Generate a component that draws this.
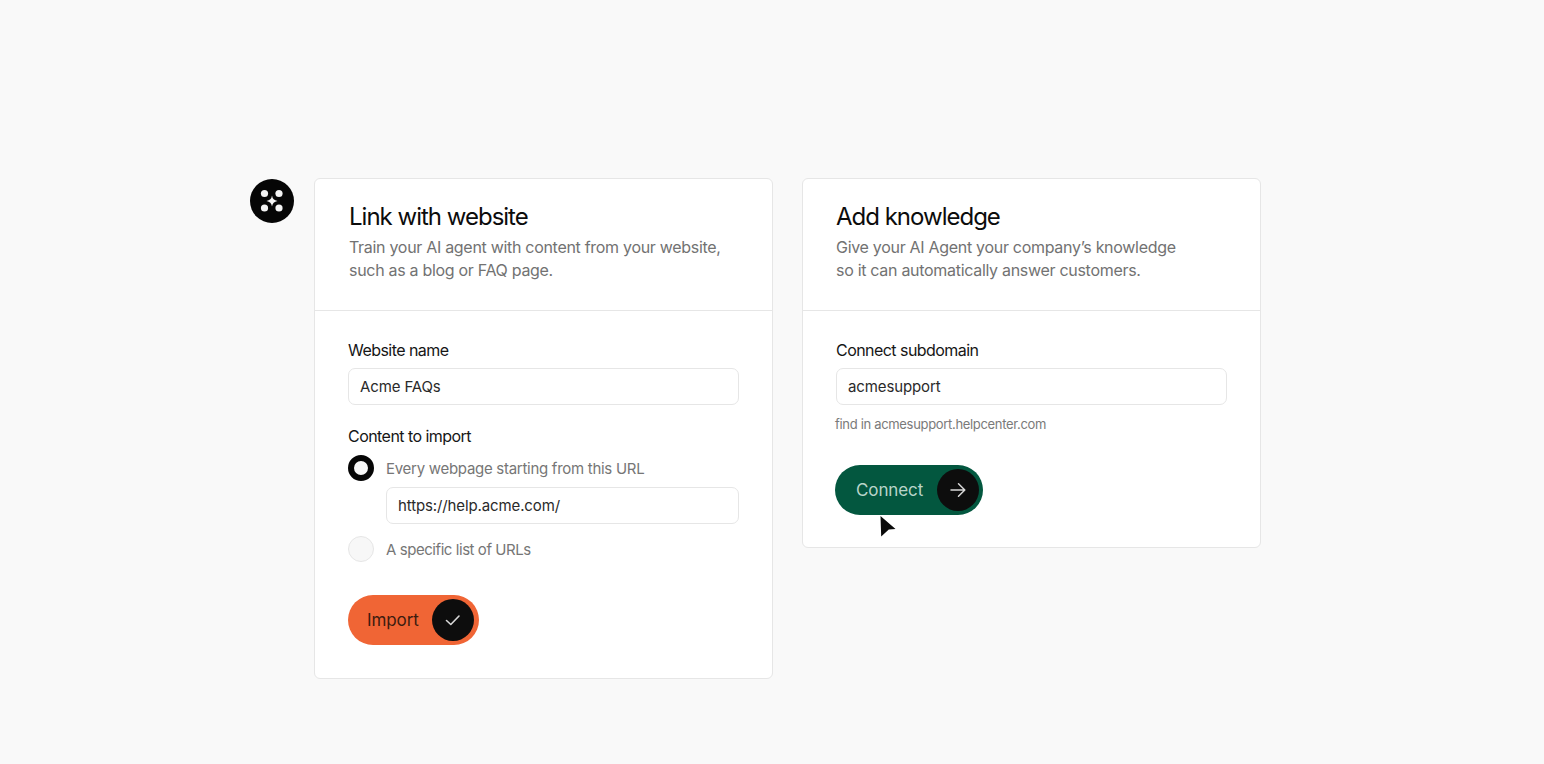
<script>
  const radios = [
    { label: 'Every webpage starting from this URL', on: true },
    { label: 'A specific list of URLs', on: false }
  ];
</script>

<main class="page">
  <div class="logo">
    <svg viewBox="0 0 44 44" width="44" height="44">
      <circle cx="22" cy="22" r="22" fill="#060606" />
      <circle cx="14.5" cy="14.5" r="3.6" fill="#f4f4f4" />
      <circle cx="29" cy="14.5" r="3.6" fill="#f4f4f4" />
      <circle cx="14.5" cy="29" r="3.6" fill="#f4f4f4" />
      <circle cx="29" cy="29" r="3.6" fill="#f4f4f4" />
      <path d="M22 16.5 Q22.6 21.2 27.5 22 Q22.6 22.8 22 27.5 Q21.4 22.8 16.5 22 Q21.4 21.2 22 16.5Z" fill="#f4f4f4" />
    </svg>
  </div>

  <section class="card">
    <header class="wide">
      <h2>Link with website</h2>
      <p>Train your AI agent with content from your website,<br />such as a blog or FAQ page.</p>
    </header>
    <div class="body">
      <span class="label">Website name</span>
      <div class="input">Acme FAQs</div>

      <span class="label second">Content to import</span>
      <div class="radio first">
        <span class="dot on"></span>
        <span>{radios[0].label}</span>
      </div>
      <div class="input nested">https://help.acme.com/</div>
      <div class="radio tight">
        <span class="dot"></span>
        <span>{radios[1].label}</span>
      </div>

      <div class="btn import">
        <span class="text">Import</span>
        <span class="knob">
          <svg viewBox="0 0 18 18" width="18" height="18" fill="none" stroke="#d8d8d8" stroke-width="1.6" stroke-linecap="round" stroke-linejoin="round">
            <path d="M2.5 9.5 L6.8 13.5 L15 5" />
          </svg>
        </span>
      </div>
    </div>
  </section>

  <section class="card short">
    <header>
      <h2>Add knowledge</h2>
      <p>Give your AI Agent your company’s knowledge<br />so it can automatically answer customers.</p>
    </header>
    <div class="body">
      <span class="label">Connect subdomain</span>
      <div class="input">acmesupport</div>
      <div class="hint">find in acmesupport.helpcenter.com</div>

      <div class="btn connect">
        <span class="text">Connect</span>
        <span class="knob">
          <svg viewBox="0 0 18 18" width="18" height="18" fill="none" stroke="#d8d8d8" stroke-width="1.5" stroke-linecap="round" stroke-linejoin="round">
            <path d="M2 9 H15.5 M9.5 2.8 L15.8 9 L9.5 15.2" />
          </svg>
        </span>
      </div>

      <svg class="cursor" viewBox="0 0 16 21" width="16" height="21">
        <path d="M0.5 0 L15.5 13 L8.8 13.6 L1.2 20.5 Z" fill="#0a0a0a" />
      </svg>
    </div>
  </section>
</main>

<style>
  :global(body) {
    margin: 0;
    background: #f9f9f9;
  }
  .page {
    height: 764px;
    box-sizing: border-box;
    padding: 178px 0 0 250px;
    display: flex;
    align-items: flex-start;
    font-family: Inter, "Liberation Sans", sans-serif;
    overflow: hidden;
  }
  .logo {
    width: 44px;
    height: 44px;
    margin: 1px 20px 0 0;
  }
  .card {
    width: 459px;
    height: 501px;
    box-sizing: border-box;
    background: #fff;
    border: 1px solid #e6e6e6;
    border-radius: 6px;
    margin-right: 29px;
  }
  .card.short {
    height: 370px;
    margin-right: 0;
  }
  header {
    height: 132px;
    box-sizing: border-box;
    padding: 23px 33px 0;
    border-bottom: 1px solid #e6e6e6;
  }
  header.wide {
    padding-left: 34px;
  }
  h2 {
    margin: 0;
    font-size: 24px;
    line-height: 30px;
    font-weight: 400;
    letter-spacing: -1px;
    color: #0c0c0c;
  }
  p {
    margin: 4px 0 0;
    font-size: 16px;
    line-height: 23px;
    letter-spacing: -0.3px;
    color: #727272;
  }
  .body {
    position: relative;
    padding: 28px 33px 0;
  }
  .label {
    display: block;
    font-size: 16px;
    line-height: 22px;
    letter-spacing: -0.55px;
    color: #161616;
  }
  .label.second {
    margin-top: 20px;
  }
  .input {
    margin-top: 7px;
    height: 37px;
    box-sizing: border-box;
    padding: 0 11px;
    background: #fff;
    border: 1px solid #e6e6e6;
    border-radius: 7px;
    font-size: 15px;
    line-height: 35px;
    letter-spacing: -0.12px;
    color: #2a2a2a;
  }
  .input.nested {
    margin: 6px 0 0 38px;
  }
  .radio {
    display: flex;
    align-items: center;
    gap: 12px;
    margin-top: 12px;
    font-size: 15px;
    letter-spacing: -0.3px;
    color: #767676;
  }
  .radio.first {
    margin-top: 8px;
    letter-spacing: -0.28px;
  }
  .radio.tight {
    letter-spacing: -0.44px;
  }
  .dot {
    width: 26px;
    height: 26px;
    box-sizing: border-box;
    flex: none;
    border-radius: 50%;
    background: #f7f7f7;
    border: 1px solid #e6e6e6;
  }
  .dot.on {
    border: 6px solid #060606;
  }
  .btn {
    display: flex;
    align-items: center;
    justify-content: space-between;
    height: 50px;
    box-sizing: border-box;
    border-radius: 25px;
    padding: 0 5px 0 19px;
    font-size: 17px;
    letter-spacing: -0.1px;
  }
  .btn.import {
    width: 131px;
    margin-top: 33px;
    background: #f06535;
    color: #3d1c10;
  }
  .btn.connect {
    width: 148px;
    margin-top: 32px;
    margin-left: -1px;
    padding: 0 4px 0 21px;
    background: #03573f;
    color: #b9d4c9;
  }
  .knob {
    width: 42px;
    height: 42px;
    border-radius: 50%;
    background: #0d0d0d;
    display: flex;
    align-items: center;
    justify-content: center;
  }
  .hint {
    margin-top: 10px;
    margin-left: -1px;
    font-size: 13px;
    line-height: 18px;
    letter-spacing: -0.32px;
    color: #7a7a7a;
  }
  .cursor {
    position: absolute;
    left: 77px;
    top: 205px;
  }
</style>
